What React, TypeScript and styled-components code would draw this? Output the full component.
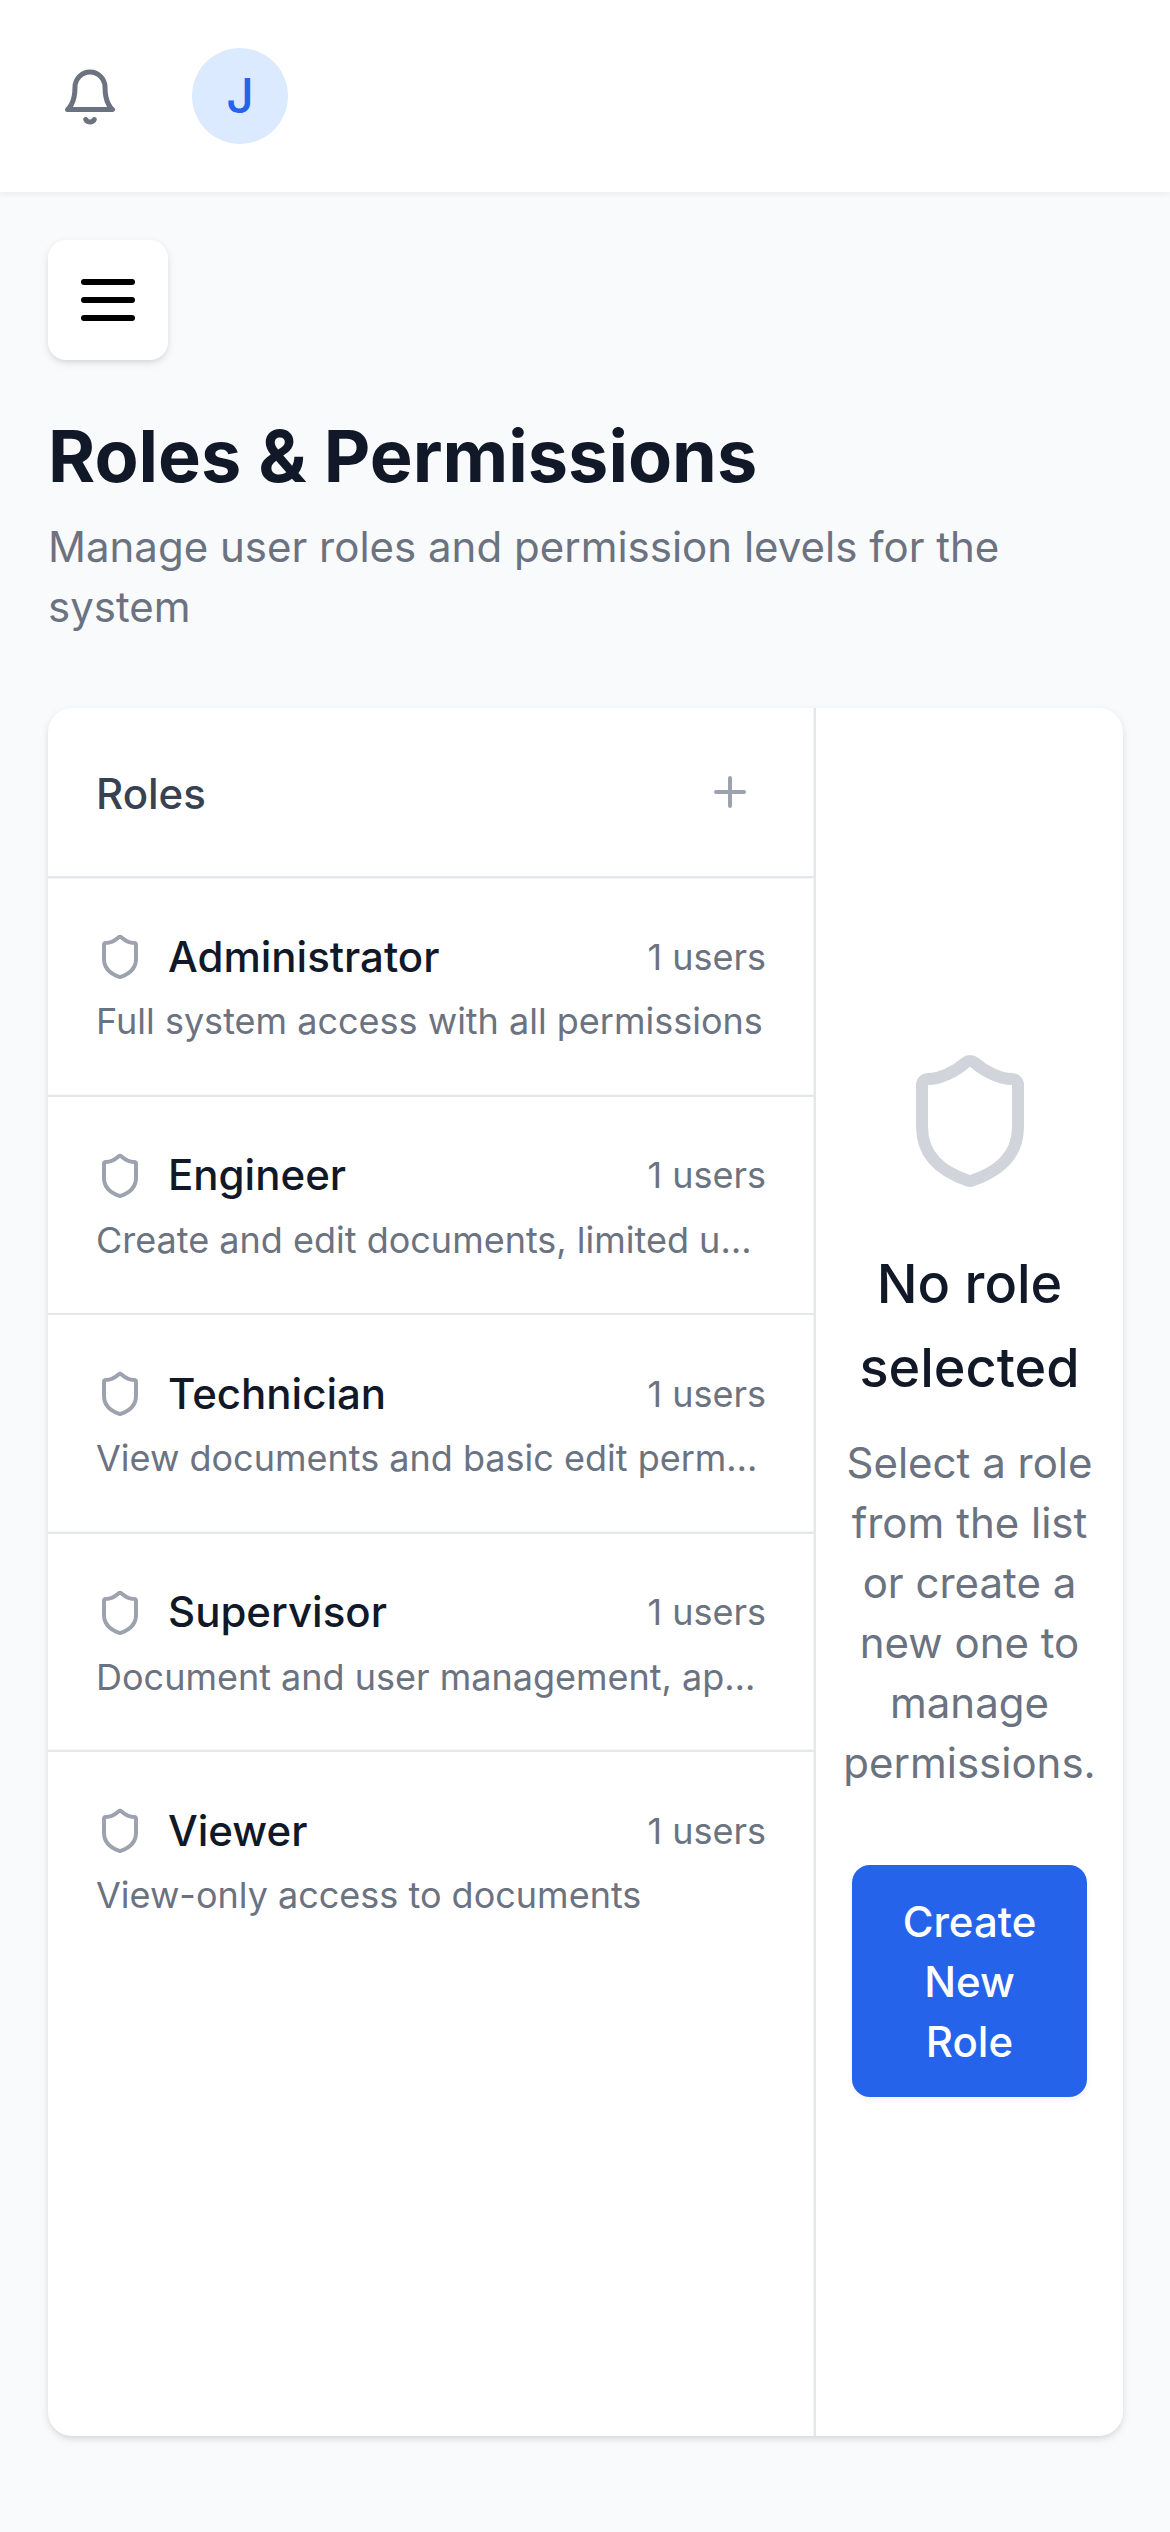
import React from "react";
import styled, { createGlobalStyle } from "styled-components";

const GlobalStyle = createGlobalStyle`
  *, *::before, *::after { box-sizing: border-box; }
  body {
    margin: 0;
    background: #f9fafb;
    font-family: Inter, "Liberation Sans", sans-serif;
    color: #111827;
  }
  h1, h2, h3, p, ul { margin: 0; padding: 0; }
  button { font: inherit; border: 0; background: none; padding: 0; color: inherit; }
`;

const Page = styled.div`
  min-height: 2532px;
  display: flex;
  flex-direction: column;
`;

const TopBar = styled.header`
  height: 192px;
  padding: 0 48px;
  display: flex;
  align-items: center;
  gap: 60px;
  background: #fff;
  box-shadow: 0 3px 6px rgba(0, 0, 0, 0.05);
`;

const BellButton = styled.button`
  display: flex;
  padding: 14px 12px 12px;
  color: #6b7280;
`;

const Avatar = styled.div`
  width: 96px;
  height: 96px;
  border-radius: 50%;
  display: flex;
  align-items: center;
  justify-content: center;
  background: #dbeafe;
  color: #2563eb;
  font-size: 48px;
  line-height: 72px;
  font-weight: 500;
`;

const Content = styled.main`
  flex: 1;
  display: flex;
  flex-direction: column;
  align-items: stretch;
  padding: 48px 47px 96px 48px;
`;

const MenuButton = styled.button`
  display: flex;
  align-self: flex-start;
  padding: 24px;
  margin-bottom: 48px;
  border-radius: 18px;
  background: #fff;
  color: #000;
  box-shadow: 0 3px 9px rgba(0, 0, 0, 0.1), 0 3px 6px -3px rgba(0, 0, 0, 0.1);
`;

const Title = styled.h1`
  font-size: 72px;
  line-height: 96px;
  font-weight: 700;
`;

const Subtitle = styled.p`
  margin-top: 13px;
  margin-bottom: 71px;
  font-size: 42px;
  line-height: 60px;
  color: #6b7280;
`;

const Card = styled.section`
  flex: 1;
  display: flex;
  overflow: hidden;
  border-radius: 24px;
  background: #fff;
  box-shadow: 0 3px 9px rgba(0, 0, 0, 0.1), 0 3px 6px -3px rgba(0, 0, 0, 0.1);
`;

const RolesPanel = styled.aside`
  width: 768px;
  flex: none;
  border-right: 2px solid #e5e7eb;
  box-shadow: inset -1px 0 #f4f5f7;
`;

const PanelHeader = styled.div`
  height: 170px;
  padding: 0 48px;
  display: flex;
  align-items: center;
  justify-content: space-between;
  border-bottom: 2px solid #e5e7eb;
  box-shadow: 0 1px #f4f5f7;
`;

const PanelTitle = styled.h2`
  padding-top: 4px;
  font-size: 42px;
  line-height: 60px;
  font-weight: 500;
  color: #374151;
`;

const AddButton = styled.button`
  display: flex;
  padding: 12px;
  color: #9ca3af;
`;

const RoleList = styled.ul`
  list-style: none;
`;

const RoleItem = styled.li`
  height: 218.5px;
  padding: 48px;
  border-bottom: 2px solid #e5e7eb;
  box-shadow: inset 0 -1px #f4f5f7;
  &:nth-child(2) { box-shadow: none; }
  &:last-child { border-bottom: 0; box-shadow: none; }
`;

const RoleTop = styled.div`
  height: 61px;
  display: flex;
  align-items: center;
  justify-content: space-between;
`;

const RoleName = styled.div`
  display: flex;
  align-items: center;
  gap: 24px;
  font-size: 42px;
  line-height: 60px;
  font-weight: 500;
  svg { color: #9ca3af; margin-top: 1px; }
`;

const RoleCount = styled.span`
  font-size: 36px;
  line-height: 48px;
  color: #6b7280;
`;

const RoleText = styled.p`
  margin-top: 10px;
  font-size: 36px;
  line-height: 48px;
  color: #6b7280;
  overflow: hidden;
  text-overflow: ellipsis;
  white-space: nowrap;
`;

const EmptyState = styled.div`
  flex: 1;
  min-width: 0;
  padding: 1px 36px 0;
  display: flex;
  flex-direction: column;
  align-items: center;
  justify-content: center;
  text-align: center;
  svg { color: #d1d5db; }
`;

const EmptyTitle = styled.h3`
  margin-top: 49px;
  font-size: 54px;
  line-height: 84px;
  font-weight: 500;
`;

const EmptyText = styled.p`
  margin-top: 23px;
  font-size: 42px;
  line-height: 60px;
  color: #6b7280;
`;

const CreateButton = styled.button`
  margin-top: 72px;
  padding: 27px 50px 25px;
  border-radius: 18px;
  background: #2563eb;
  color: #fff;
  font-size: 42px;
  line-height: 60px;
  font-weight: 500;
  box-shadow: 0 3px 6px rgba(0, 0, 0, 0.05);
`;

interface IconProps {
  size: number;
  paths: string[];
}

const Icon = ({ size, paths }: IconProps) => (
  <svg
    width={size}
    height={size}
    viewBox="0 0 24 24"
    fill="none"
    stroke="currentColor"
    strokeWidth={2}
    strokeLinecap="round"
    strokeLinejoin="round"
    aria-hidden="true"
  >
    {paths.map((d) => (
      <path key={d} d={d} />
    ))}
  </svg>
);

const BELL = ["M6 8a6 6 0 0 1 12 0c0 7 3 9 3 9H3s3-2 3-9", "M10.3 21a1.94 1.94 0 0 0 3.4 0"];
const MENU = ["M4 6h16", "M4 12h16", "M4 18h16"];
const PLUS = ["M5 12h14", "M12 5v14"];
const SHIELD = [
  "M20 13c0 5-3.5 7.5-7.66 8.95a1 1 0 0 1-.67-.01C7.5 20.5 4 18 4 13V6a1 1 0 0 1 1-1c2 0 4.5-1.2 6.24-2.72a1.17 1.17 0 0 1 1.52 0C14.51 3.81 17 5 19 5a1 1 0 0 1 1 1z",
];

const roles = [
  { name: "Administrator", users: 1, text: "Full system access with all permissions" },
  { name: "Engineer", users: 1, text: "Create and edit documents, limited user management" },
  { name: "Technician", users: 1, text: "View documents and basic edit permissions" },
  { name: "Supervisor", users: 1, text: "Document and user management, approvals" },
  { name: "Viewer", users: 1, text: "View-only access to documents" },
];

export default function App() {
  return (
    <Page>
      <GlobalStyle />
      <TopBar>
        <BellButton aria-label="Notifications">
          <Icon size={60} paths={BELL} />
        </BellButton>
        <Avatar>J</Avatar>
      </TopBar>
      <Content>
        <MenuButton aria-label="Menu">
          <Icon size={72} paths={MENU} />
        </MenuButton>
        <Title>Roles &amp; Permissions</Title>
        <Subtitle>Manage user roles and permission levels for the system</Subtitle>
        <Card>
          <RolesPanel>
            <PanelHeader>
              <PanelTitle>Roles</PanelTitle>
              <AddButton aria-label="Add role">
                <Icon size={48} paths={PLUS} />
              </AddButton>
            </PanelHeader>
            <RoleList>
              {roles.map((role) => (
                <RoleItem key={role.name}>
                  <RoleTop>
                    <RoleName>
                      <Icon size={48} paths={SHIELD} />
                      {role.name}
                    </RoleName>
                    <RoleCount>{role.users} users</RoleCount>
                  </RoleTop>
                  <RoleText>{role.text}</RoleText>
                </RoleItem>
              ))}
            </RoleList>
          </RolesPanel>
          <EmptyState>
            <Icon size={144} paths={SHIELD} />
            <EmptyTitle>No role selected</EmptyTitle>
            <EmptyText>Select a role from the list or create a new one to manage permissions.</EmptyText>
            <CreateButton>Create New Role</CreateButton>
          </EmptyState>
        </Card>
      </Content>
    </Page>
  );
}
